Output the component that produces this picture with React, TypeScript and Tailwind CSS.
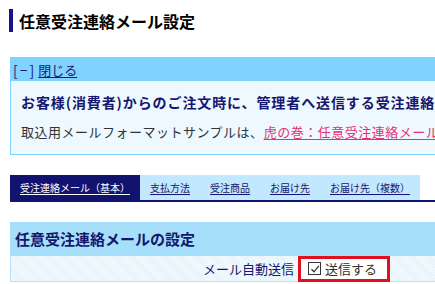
import React from "react";

const tabs = ["支払方法", "受注商品", "お届け先", "お届け先（複数）"];

export default function App() {
  return (
    <div
      className="w-[435px] h-[284px] overflow-hidden bg-white text-[#1a1a1a]"
      style={{ fontFamily: '"Noto Sans CJK JP", "Noto Sans", sans-serif' }}
    >
      <div className="w-[700px]">
        {/* page title */}
        <div className="pt-[9px] pl-[9px]">
          <h1 className="border-l-4 border-[#16168a] pl-[6px] h-[23px] flex items-center text-[16px] font-bold leading-none text-black">
            任意受注連絡メール設定
          </h1>
        </div>

        {/* help box */}
        <div className="ml-[10px] mt-[25px] border border-[#7fd0ff] bg-[#eef8ff]">
          <div className="h-[23px] bg-[#80d2ff] flex items-center pl-[2px] text-[13px] leading-none text-[#1a1a6e]">
            <span className="text-[14px] tracking-[2px]">[−]</span>
            <a className="ml-[2px] underline underline-offset-2">閉じる</a>
          </div>
          <div className="pl-[10px] h-[73px] pt-[12px]">
            <p className="text-[14px] font-bold text-[#16166e] leading-[18px] tracking-[0.9px] whitespace-nowrap">
              お客様(消費者)からのご注文時に、管理者へ送信する受注連絡メールの設定を行います。
            </p>
            <p className="mt-[12px] text-[13px] leading-[18px] tracking-[0.5px] text-[#333] whitespace-nowrap">
              取込用メールフォーマットサンプルは、
              <a className="text-[#e8306e] underline underline-offset-2">
                虎の巻：任意受注連絡メールの設定
              </a>
            </p>
          </div>
        </div>

        {/* tabs */}
        <div className="ml-[10px] mt-[20px] flex border-b-2 border-[#12126f]">
          <a className="h-[25px] px-[10px] bg-[#12126f] text-white text-[10px] flex items-center underline underline-offset-2 whitespace-nowrap">
            受注連絡メール（基本）
          </a>
          <div className="flex bg-[#c2e8ff]">
            {tabs.map((t) => (
              <a
                key={t}
                className="h-[25px] px-[10px] text-[#16166e] text-[10px] flex items-center underline underline-offset-2 whitespace-nowrap"
              >
                {t}
              </a>
            ))}
          </div>
        </div>

        {/* settings section */}
        <div className="ml-[10px] mt-[20px]">
          <div className="h-[34px] bg-[#a6dffa] flex items-center pl-[5px] text-[15px] font-bold text-[#16166e]">
            任意受注連絡メールの設定
          </div>
          <div className="flex h-[26px] border-l border-b border-[#b8e4f8] bg-[repeating-linear-gradient(45deg,#f3fafd_0px,#f3fafd_1px,#e6f3fa_1px,#e6f3fa_2px)]">
            <div className="w-[287px] flex items-center justify-end pr-[4px] text-[13px] text-[#16166e]">
              メール自動送信
            </div>
            <div className="flex items-center">
              <label className="h-[26px] w-[92px] border-[3px] border-[#e01020] bg-white flex items-center pl-[7px] text-[13px] text-[#333]">
                <span className="w-[13px] h-[13px] border border-[#333] flex items-center justify-center mr-[4px]">
                  <svg width="10" height="10" viewBox="0 0 10 10">
                    <path d="M1.5 5.2 L4 7.8 L8.8 1.8" fill="none" stroke="#333" strokeWidth="1.3" />
                  </svg>
                </span>
                送信する
              </label>
            </div>
          </div>
        </div>
      </div>
    </div>
  );
}
